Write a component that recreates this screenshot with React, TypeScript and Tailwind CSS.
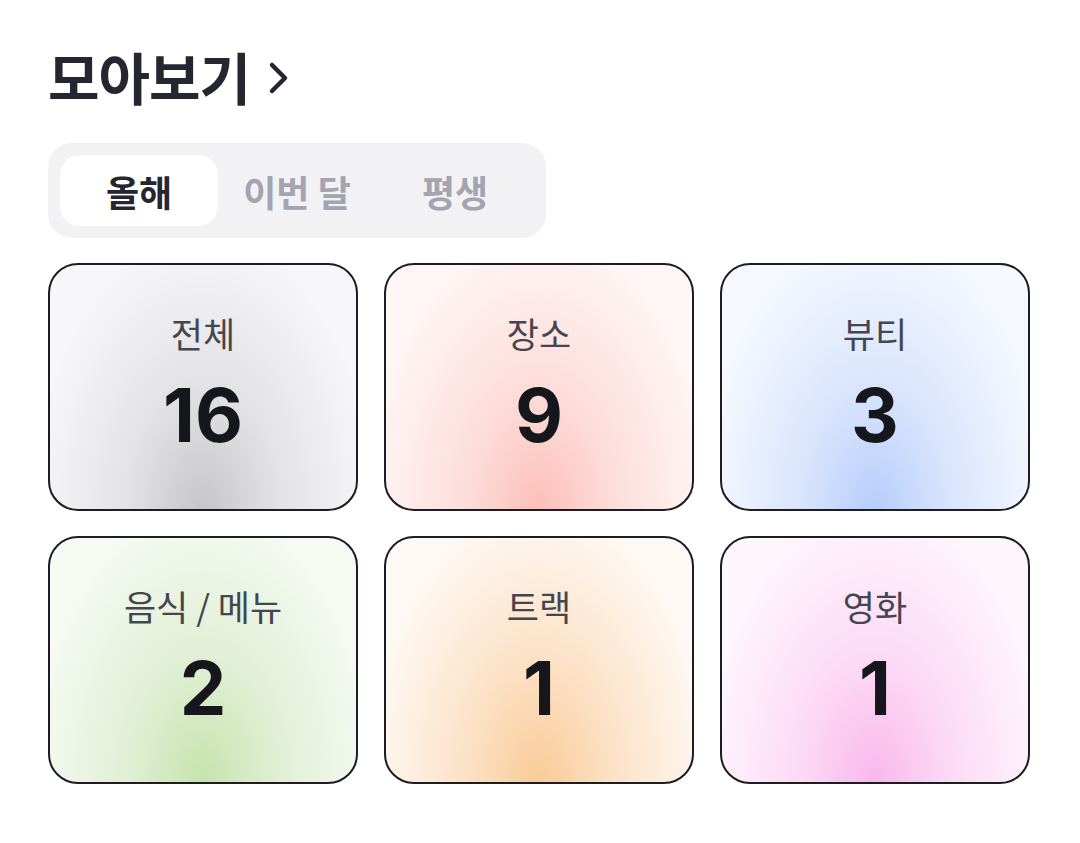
import React from "react";

const cards = [
  { label: "전체", value: "16", bg: "bg-[radial-gradient(ellipse_56%_115%_at_50%_100%,#c6c6c9_0%,#e3e3e5_45%,#f7f7f9_100%)]" },
  { label: "장소", value: "9", bg: "bg-[radial-gradient(ellipse_56%_115%_at_50%_100%,#fcc0b8_0%,#fddedb_45%,#fef6f5_100%)]" },
  { label: "뷰티", value: "3", bg: "bg-[radial-gradient(ellipse_56%_115%_at_50%_100%,#b6cefb_0%,#dae5fd_45%,#f5f8fe_100%)]" },
  { label: "음식 / 메뉴", value: "2", bg: "bg-[radial-gradient(ellipse_56%_115%_at_50%_100%,#c6e3ac_0%,#e1efd5_45%,#f6faf3_100%)]" },
  { label: "트랙", value: "1", bg: "bg-[radial-gradient(ellipse_56%_115%_at_50%_100%,#f9cb98_0%,#fce2c7_45%,#fef9f4_100%)]" },
  { label: "영화", value: "1", bg: "bg-[radial-gradient(ellipse_56%_115%_at_50%_100%,#f9b8ec_0%,#fcdaf5_45%,#fef6fd_100%)]" },
];

export default function App() {
  return (
    <div
      className="w-[1080px] h-[843px] bg-white px-[48px] pt-[40px]"
      style={{ fontFamily: '"Noto Sans CJK KR", "Noto Sans", sans-serif' }}
    >
      <div className="flex items-center h-[72px]">
        <h1 className="text-[56px] font-bold text-[#262630] leading-none tracking-[-1px]">모아보기</h1>
        <svg width="24" height="36" viewBox="0 0 24 36" className="ml-[17px] mt-[4px]">
          <path d="M5 5 L18 18 L5 31" fill="none" stroke="#262630" strokeWidth="4.5" strokeLinecap="round" strokeLinejoin="round" />
        </svg>
      </div>

      <div className="mt-[31px] w-[498px] h-[95px] rounded-[24px] bg-[#f2f2f5] p-[12px] flex">
        <div className="w-[158px] h-full rounded-[20px] bg-white flex items-center justify-center text-[36px] font-semibold text-[#262630]">
          올해
        </div>
        <div className="w-[158px] h-full flex items-center justify-center text-[36px] font-semibold text-[#a3a3b2]">
          이번 달
        </div>
        <div className="w-[158px] h-full flex items-center justify-center text-[36px] font-semibold text-[#a3a3b2]">
          평생
        </div>
      </div>

      <div className="mt-[25px] grid grid-cols-[310px_310px_310px] gap-x-[26px] gap-y-[25px]">
        {cards.map((c) => (
          <div
            key={c.label}
            className={`h-[248px] rounded-[30px] border-2 border-[#1c1c22] ${c.bg} flex flex-col items-center`}
          >
            <div className="mt-[44px] text-[35px] leading-[48px] text-[#45454f]">{c.label}</div>
            <div
              className="mt-[16px] text-[74px] leading-[84px] font-bold text-[#16161d]"
              style={{ fontFamily: 'Inter, "Noto Sans", sans-serif' }}
            >
              {c.value}
            </div>
          </div>
        ))}
      </div>
    </div>
  );
}
